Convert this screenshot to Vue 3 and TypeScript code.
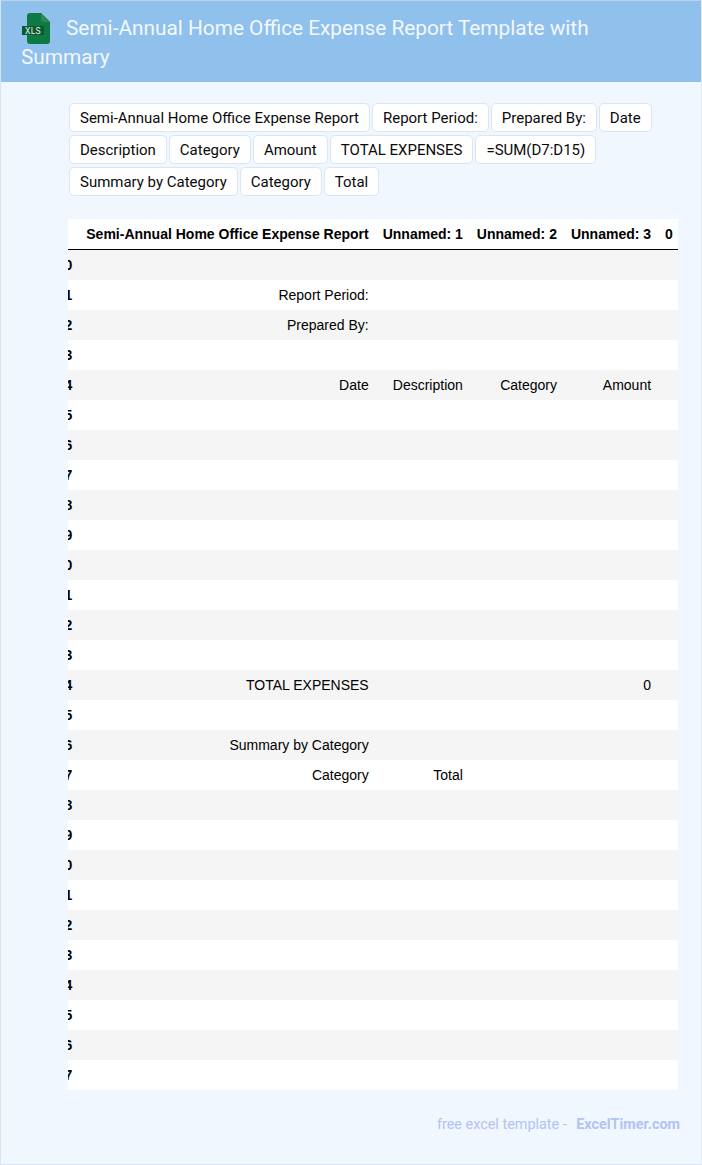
<script setup lang="ts">
const chips: string[] = [
  'Semi-Annual Home Office Expense Report', 'Report Period:', 'Prepared By:', 'Date',
  'Description', 'Category', 'Amount', 'TOTAL EXPENSES', '=SUM(D7:D15)',
  'Summary by Category', 'Category', 'Total',
]
const headers: string[] = ['Semi-Annual Home Office Expense Report', 'Unnamed: 1', 'Unnamed: 2', 'Unnamed: 3', '0']
const filled: Record<number, string[]> = {
  1: ['Report Period:'],
  2: ['Prepared By:'],
  4: ['Date', 'Description', 'Category', 'Amount'],
  14: ['TOTAL EXPENSES', '', '', '0'],
  16: ['Summary by Category'],
  17: ['Category', 'Total'],
}
const rows = Array.from({ length: 28 }, (_, i) => {
  const f = filled[i] ?? []
  return { index: i, cells: [0, 1, 2, 3, 4].map((c) => f[c] ?? '') }
})
</script>

<template>
  <div class="page">
    <header class="banner">
      <h1 class="title">
        <svg class="icon" width="30" height="32" viewBox="0 0 30 32" aria-hidden="true">
          <path d="M9 1C7 1 6 2 6 4V29C6 31 7 32 9 32H26C28 32 29 31 29 29V10L20 1Z" fill="#0e7a43" />
          <path d="M20 1V7.500C20 9 21 10 22.500 10H29Z" fill="#2a8a58" />
          <rect x="1" y="14" width="22" height="9" fill="#0a5a30" />
          <text x="12" y="21.500" text-anchor="middle" class="icon-text">XLS</text>
        </svg>Semi-Annual Home Office Expense Report Template with Summary
      </h1>
    </header>
    <main class="content">
      <div class="chips">
        <span v-for="(c, i) in chips" :key="i" class="chip">{{ c }}</span>
      </div>
      <div class="table-clip">
        <table class="sheet">
          <thead>
            <tr>
              <th class="idx"></th>
              <th v-for="(h, i) in headers" :key="i">{{ h }}</th>
            </tr>
          </thead>
          <tbody>
            <tr v-for="r in rows" :key="r.index">
              <th class="idx">{{ r.index }}</th>
              <td v-for="(c, i) in r.cells" :key="i">{{ c }}</td>
            </tr>
          </tbody>
        </table>
      </div>
      <footer class="foot">
        <span>free excel template - </span>
        <a class="brand">ExcelTimer.com</a>
      </footer>
    </main>
  </div>
</template>

<style>
html, body { margin: 0; padding: 0; }
</style>

<style scoped>
.page {
  width: 702px;
  height: 1165px;
  box-sizing: border-box;
  background: #f0f7ff;
  border: 1px solid #d9e4f2;
  border-top-color: #b9d3ee;
  border-right-color: #e2ebf6;
  font-family: Roboto, sans-serif;
  overflow: hidden;
}
.banner {
  background: #90c0ec;
  height: 81px;
  box-sizing: border-box;
  padding: 13px 20px 0;
}
.title {
  margin: 0;
  font-size: 20.800px;
  line-height: 29px;
  font-weight: 400;
  color: #f3f8fe;
}
.icon {
  display: inline-block;
  vertical-align: middle;
  margin: -6px 15px -2px 0;
}
.icon-text {
  font-family: Roboto, sans-serif;
  font-size: 8.500px;
  font-weight: 400;
  fill: #e6f2ea;
  letter-spacing: 0.300px;
}
.content {
  padding: 21px 23px 0 67px;
}
.chips {
  display: flex;
  flex-wrap: wrap;
  gap: 3px 2px;
  padding-left: 1px;
}
.chip {
  box-sizing: border-box;
  height: 29px;
  line-height: 28px;
  padding: 0 10px;
  background: #fff;
  border: 1px solid #dce6f2;
  border-radius: 5px;
  font-size: 14.990px;
  color: #0a0a0a;
  white-space: nowrap;
}
.table-clip {
  margin-top: 23px;
  width: 610px;
  overflow-x: auto;
  scrollbar-width: none;
  background: #fff;
}
.sheet {
  margin-left: -18.300px;
  border-collapse: collapse;
  font-family: "Liberation Sans", Arial, sans-serif;
  font-size: 14px;
  color: #000;
}
.sheet thead th {
  height: 30px;
  padding: 0 7px;
  text-align: right;
  font-weight: 700;
  border-bottom: 1px solid #000;
  white-space: nowrap;
}
.sheet tbody th,
.sheet tbody td {
  height: 30px;
  padding: 0 7px;
  text-align: right;
  white-space: nowrap;
}
.sheet tbody th { font-weight: 700; }
.sheet tbody td { font-weight: 400; }
.sheet tbody tr:nth-child(odd) { background: #f5f5f5; }
.foot {
  margin-top: 26px;
  text-align: right;
  font-size: 14.400px;
  line-height: 18px;
  color: #b3c3f3;
  margin-right: -2px;
}
.brand {
  font-weight: 700;
  margin-left: 6px;
}
</style>
